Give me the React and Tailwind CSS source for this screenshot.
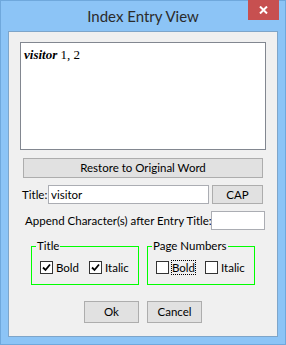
import { useState } from 'react';

const font = "font-['Segoe_UI','Lato','Open_Sans',sans-serif]";

const Check = ({ checked }) => (
  <span className="w-[13px] h-[13px] border border-[#333] bg-white flex items-center justify-center shrink-0">
    {checked && (
      <svg width="9" height="9" viewBox="0 0 9 9">
        <path d="M1 4.5 L3.5 7 L8 1.5" fill="none" stroke="#000" strokeWidth="1.8" />
      </svg>
    )}
  </span>
);

const CheckItem = ({ label, checked, focused, className = '' }) => (
  <label className={`flex items-center gap-[3px] ${className}`}>
    <Check checked={checked} />
    <span className={focused ? 'outline-1 outline-dotted outline-black leading-[13px]' : 'leading-[13px]'}>{label}</span>
  </label>
);

const Group = ({ title, children }) => (
  <div className="relative w-[108px] h-[39px] border border-[#00ff00] pl-[8px] pt-[14px] flex items-start shrink-0">
    <span className="absolute left-[4px] top-[-8px] px-[1px] bg-[#f0f0f0] leading-[14px]">{title}</span>
    {children}
  </div>
);

const Button = ({ className, children }) => (
  <button className={`bg-[#e1e1e1] border border-[#adadad] flex items-center justify-center text-black whitespace-nowrap ${className}`}>
    {children}
  </button>
);

const App = () => {
  const [title, setTitle] = useState('visitor');

  return (
    <div className={`w-[286px] h-[345px] bg-[#8cc4f6] border border-[#6fa8dc] flex flex-col text-[11.5px] text-black ${font}`}>
      {/* title bar */}
      <div className="h-[30px] flex items-start relative">
        <div className="flex-1 text-center text-[15px] text-[#2b2b2b] pt-[4px]">Index Entry View</div>
        <div className="absolute right-[6px] top-[-1px] w-[31px] h-[20px] bg-[#c75050] flex items-center justify-center">
          <svg width="9" height="8" viewBox="0 0 9 8">
            <path d="M1 0.5 L8 7.5 M8 0.5 L1 7.5" stroke="#fff" strokeWidth="2" />
          </svg>
        </div>
      </div>

      {/* client area */}
      <div className="mx-[7px] h-[306px] bg-[#f0f0f0] border border-[#7ea5c9] flex flex-col">
        <div className="ml-[11px] mt-[10px] w-[246px] h-[108px] bg-white border border-[#828790] px-[3px] pt-[2px] font-['Liberation_Serif',serif] text-[13px]">
          <b><i>visitor</i></b> 1, 2
        </div>

        <Button className="ml-[14px] mt-[8px] w-[240px] h-[20px]">Restore to Original Word</Button>

        <div className="flex items-center mt-[7px] ml-[13px] h-[19px] whitespace-nowrap">
          <span className="w-[26px]">Title:</span>
          <input
            value={title}
            onChange={(e) => setTitle(e.target.value)}
            className="w-[161px] h-[19px] border border-[#abadb3] bg-white px-[2px] outline-none"
          />
          <Button className="ml-[3px] w-[51px] h-[19px]">CAP</Button>
        </div>

        <div className="flex items-center mt-[7px] ml-[16px] h-[19px] whitespace-nowrap">
          <span className="w-[186px]">Append Character(s) after Entry Title:</span>
          <input className="w-[54px] h-[19px] border border-[#abadb3] bg-white outline-none" />
        </div>

        <div className="flex gap-[8px] ml-[22px] mt-[16px]">
          <Group title="Title">
            <CheckItem className="w-[49px]" label="Bold" checked />
            <CheckItem label="Italic" checked />
          </Group>
          <Group title="Page Numbers">
            <CheckItem className="w-[49px]" label="Bold" focused />
            <CheckItem label="Italic" />
          </Group>
        </div>

        <div className="flex gap-[8px] ml-[75px] mt-[16px]">
          <Button className="w-[55px] h-[22px]">Ok</Button>
          <Button className="w-[55px] h-[22px]">Cancel</Button>
        </div>
      </div>
    </div>
  );
};

export default App;
